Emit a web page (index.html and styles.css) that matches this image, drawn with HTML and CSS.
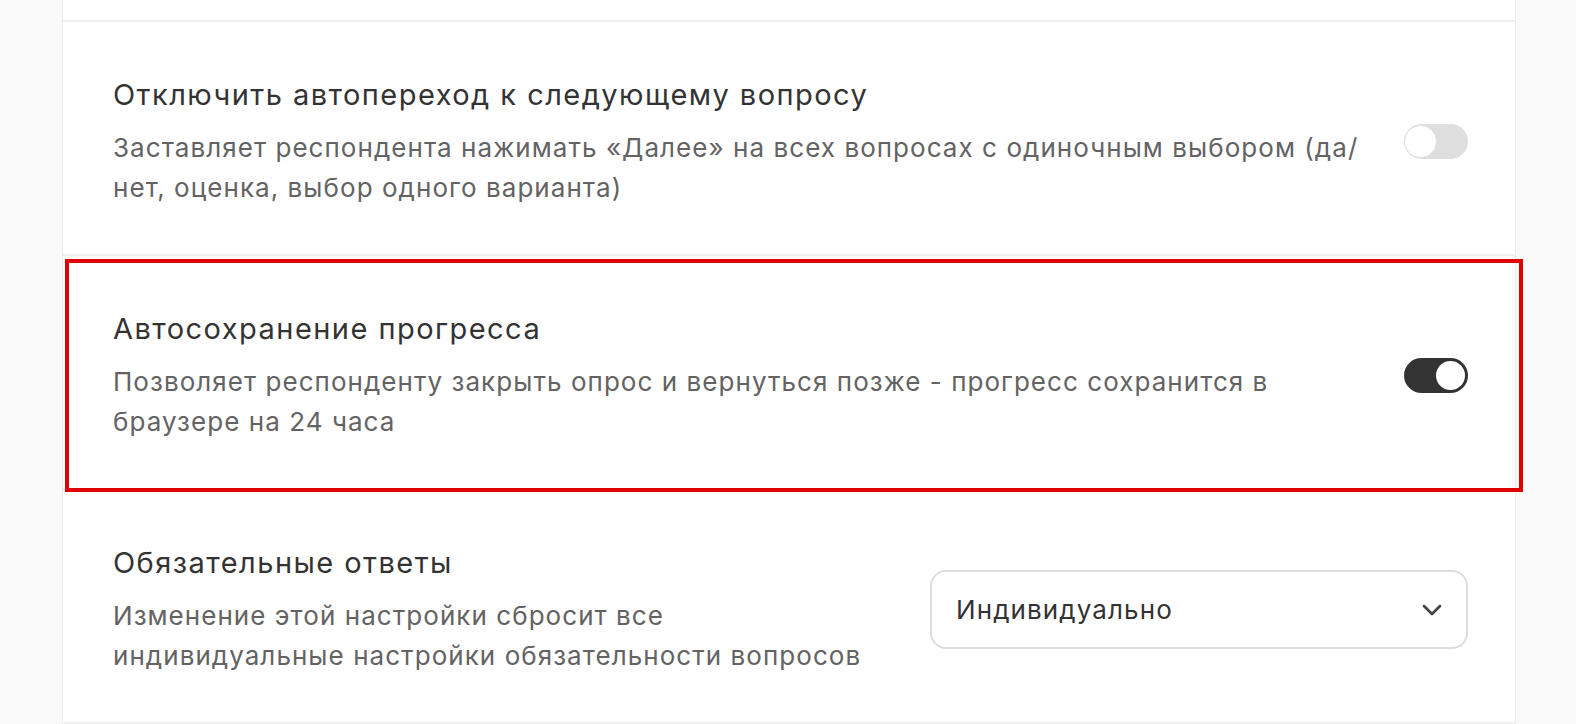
FILE: index.html
```html
<!DOCTYPE html>
<html lang="ru">
<head>
<meta charset="utf-8">
<title>Настройки опроса</title>
<link rel="stylesheet" href="styles.css">
</head>
<body>
<div class="card">
  <div class="card-top"></div>

  <div class="row">
    <div class="text">
      <div class="title">Отключить автопереход к следующему вопросу</div>
      <div class="desc">Заставляет респондента нажимать «Далее» на всех вопросах с одиночным выбором (да/нет, оценка, выбор одного варианта)</div>
    </div>
    <div class="toggle"><span class="knob"></span></div>
  </div>

  <div class="row">
    <div class="text">
      <div class="title">Автосохранение прогресса</div>
      <div class="desc">Позволяет респонденту закрыть опрос и вернуться позже - прогресс сохранится в браузере на 24 часа</div>
    </div>
    <div class="toggle on"><span class="knob"></span></div>
  </div>

  <div class="row">
    <div class="text narrow">
      <div class="title">Обязательные ответы</div>
      <div class="desc">Изменение этой настройки сбросит все индивидуальные настройки обязательности вопросов</div>
    </div>
    <div class="select">
      <span class="select-value">Индивидуально</span>
      <svg class="chevron" width="20" height="12" viewBox="0 0 20 12" aria-hidden="true">
        <path d="M2 2 L10 10 L18 2" fill="none" stroke="#444" stroke-width="2.6" stroke-linecap="round" stroke-linejoin="round"/>
      </svg>
    </div>
  </div>

  <div class="highlight"></div>
</div>
</body>
</html>
```

FILE: styles.css
```css
html, body {
  margin: 0;
  padding: 0;
}
body {
  background: #f9f9f9;
  font-family: "Inter", "Noto Sans", "Liberation Sans", sans-serif;
  height: 724px;
  overflow: hidden;
}
.card {
  position: relative;
  margin-left: 62px;
  width: 1454px;
  background: #fff;
  border-left: 1px solid #eeeeee;
  border-right: 1px solid #eeeeee;
  box-sizing: border-box;
}
.card-top {
  height: 20px;
  border-bottom: 2px solid #f0f0f0;
}
.row {
  display: flex;
  align-items: center;
  justify-content: space-between;
  gap: 24px;
  padding: 53px 47px 46px 50px;
  border-bottom: 2px solid #f0f0f0;
}
.text {
  flex: 1;
  max-width: 1255px;
}
.text.narrow {
  max-width: 765px;
}
.title {
  font-size: 29px;
  line-height: 40px;
  letter-spacing: 1.45px;
  color: #333333;
  margin-bottom: 13px;
}
.desc {
  font-size: 26px;
  line-height: 40px;
  letter-spacing: 1.05px;
  color: #636363;
}
.toggle {
  flex: none;
  position: relative;
  width: 64px;
  height: 35px;
  border-radius: 18px;
  background: #dedede;
}
.toggle .knob {
  position: absolute;
  left: 0;
  top: 1px;
  width: 31px;
  height: 31px;
  border-radius: 50%;
  background: #fff;
  border: 1px solid #e2e2e2;
}
.toggle.on {
  background: #333333;
}
.toggle.on .knob {
  left: auto;
  right: 3px;
  top: 3px;
  width: 29px;
  height: 29px;
  border: none;
}
.select {
  flex: none;
  width: 538px;
  height: 79px;
  box-sizing: border-box;
  border: 2px solid #dddddd;
  border-radius: 16px;
  display: flex;
  align-items: center;
  justify-content: space-between;
  padding: 0 24px 0 24px;
}
.select-value {
  font-size: 26px;
  letter-spacing: 1.1px;
  color: #333333;
}
.chevron {
  display: block;
}
.highlight {
  position: absolute;
  left: 2px;
  top: 259px;
  width: 1458px;
  height: 233px;
  box-sizing: border-box;
  border: 4px solid #e00000;
  pointer-events: none;
}
```
